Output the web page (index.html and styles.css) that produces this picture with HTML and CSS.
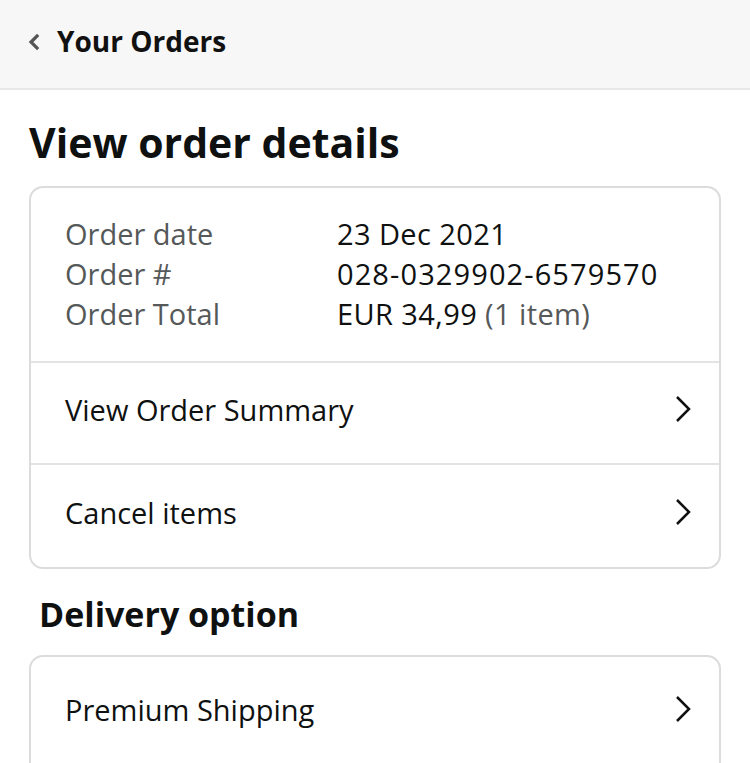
FILE: index.html
```html
<!DOCTYPE html>
<html>
<head>
<meta charset="utf-8">
<link rel="stylesheet" href="styles.css">
</head>
<body>
<header class="topbar">
  <svg class="back" width="14" height="18" viewBox="0 0 14 18"><path d="M10 3 L4 9 L10 15" fill="none" stroke="#555" stroke-width="3.2" stroke-linecap="square"/></svg>
  <span class="topbar-title">Your Orders</span>
</header>
<main class="page">
  <h1 class="title">View order details</h1>
  <section class="card">
    <div class="info">
      <div class="info-row"><span class="label">Order date</span><span class="value">23 Dec 2021</span></div>
      <div class="info-row"><span class="label">Order #</span><span class="value num">028-0329902-6579570</span></div>
      <div class="info-row"><span class="label">Order Total</span><span class="value">EUR 34,99 <span class="muted">(1 item)</span></span></div>
    </div>
    <div class="link-row"><span>View Order Summary</span><svg class="chev" width="20" height="30" viewBox="0 0 20 30"><path d="M4 3 L16 15 L4 27" fill="none" stroke="#111" stroke-width="2.5"/></svg></div>
    <div class="link-row"><span>Cancel items</span><svg class="chev" width="20" height="30" viewBox="0 0 20 30"><path d="M4 3 L16 15 L4 27" fill="none" stroke="#111" stroke-width="2.5"/></svg></div>
  </section>
  <h2 class="subtitle">Delivery option</h2>
  <section class="card card-open">
    <div class="link-row link-row-top"><span>Premium Shipping</span><svg class="chev" width="20" height="30" viewBox="0 0 20 30"><path d="M4 3 L16 15 L4 27" fill="none" stroke="#111" stroke-width="2.5"/></svg></div>
  </section>
</main>
</body>
</html>
```
FILE: styles.css
```css
* { box-sizing: border-box; }
html, body { margin: 0; padding: 0; background: #fff; }
body {
  font-family: "Open Sans", "Noto Sans", sans-serif;
  color: #0f1111;
  width: 750px;
  height: 763px;
  overflow: hidden;
}
.topbar {
  height: 90px;
  background: #f7f7f7;
  border-bottom: 2px solid #e8e8e8;
  display: flex;
  align-items: center;
  padding-left: 27px;
  padding-bottom: 6px;
  gap: 16px;
}
.back { display: block; margin-top: 2px; }
.topbar-title {
  font-size: 28px;
  font-weight: 700;
  color: #111;
}
.page { padding: 0 29px; }
.title {
  margin: 26px 0 18px;
  font-size: 41px;
  font-weight: 700;
  line-height: 52px;
}
.card {
  border: 2px solid #dcdcdc;
  border-radius: 14px;
  overflow: hidden;
}
.card-open { height: 140px; }
.info {
  padding: 26px 34px 27px;
  border-bottom: 2px solid #e3e3e3;
}
.info-row {
  display: flex;
  font-size: 29px;
  line-height: 40px;
}
.label { width: 272px; color: #565959; }
.value { color: #0f1111; letter-spacing: 0.4px; }
.num { letter-spacing: 1.1px; }
.muted { color: #565959; }
.link-row {
  height: 102px;
  display: flex;
  align-items: center;
  justify-content: space-between;
  padding: 0 26px 8px 34px;
  font-size: 29px;
  border-bottom: 2px solid #e3e3e3;
}
.link-row:last-child { border-bottom: none; }
.link-row-top { padding-bottom: 0; padding-top: 2px; }
.chev { display: block; }
.subtitle {
  margin: 22px 0 18px 10px;
  font-size: 34px;
  font-weight: 700;
  line-height: 46px;
}
```
